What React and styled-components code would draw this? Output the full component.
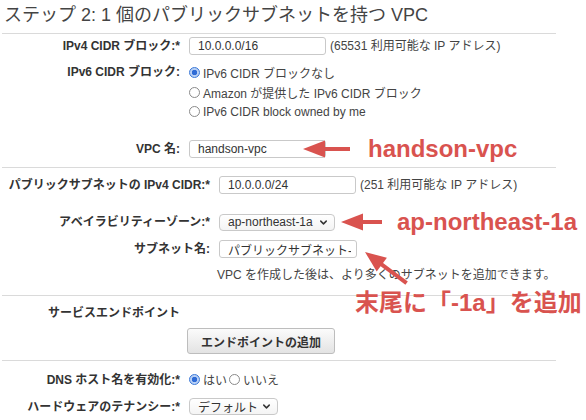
import React from 'react'
import styled, { createGlobalStyle } from 'styled-components'
import { ChevronDown } from 'lucide-react'

const GlobalStyle = createGlobalStyle`
  body {
    margin: 0;
    background: #fff;
    font-family: "Liberation Sans", "Noto Sans CJK JP", sans-serif;
    color: #444;
  }
`

const RED = '#d9534f'

function LeftArrow({ width }) {
  return (
    <svg width={width} height="18" viewBox={`0 0 ${width} 18`}>
      <polygon points="0,9 22,0.5 22,17.5" fill={RED} />
      <rect x="20" y="7" width={width - 20} height="4" fill={RED} />
    </svg>
  )
}

function App() {
  return (
    <Page>
      <GlobalStyle />
      <Title>ステップ 2: 1 個のパブリックサブネットを持つ VPC</Title>
      <Rule $top={6} />

      <Row $label={180} $gap={3} $h={18}>
        <Label>IPv4 CIDR ブロック:*</Label>
        <Field>
          <TextBox readOnly value="10.0.0.0/16" $w={137} />
          <Note>(65531 利用可能な IP アドレス)</Note>
        </Field>
      </Row>
      <Row $label={180} $gap={8} $h={58.5} $top>
        <Label $line={19.5}>IPv6 CIDR ブロック:</Label>
        <Options>
          <Choice><Radio $on />IPv6 CIDR ブロックなし</Choice>
          <Choice><Radio />Amazon が提供した IPv6 CIDR ブロック</Choice>
          <Choice><Radio />IPv6 CIDR block owned by me</Choice>
        </Options>
      </Row>
      <Row $label={180} $gap={18.5} $h={18}>
        <Label>VPC 名:</Label>
        <Field>
          <TextBox readOnly value="handson-vpc" $w={137} />
          <Callout $shift={-27} $gap={18}>
            <LeftArrow width={47} />
            <CalloutText>handson-vpc</CalloutText>
          </Callout>
        </Field>
      </Row>
      <Rule $top={9} />

      <Row $label={210} $gap={8} $h={18}>
        <Label>パブリックサブネットの IPv4 CIDR:*</Label>
        <Field>
          <TextBox readOnly value="10.0.0.0/24" $w={137} />
          <Note>(251 利用可能な IP アドレス)</Note>
        </Field>
      </Row>
      <Row $label={210} $gap={19} $h={17}>
        <Label>アベイラビリティーゾーン:*</Label>
        <Field>
          <Select $w={116}>
            ap-northeast-1a
            <ChevronDown size={11} strokeWidth={3.2} color="#333" />
          </Select>
          <Callout $shift={2} $gap={15}>
            <LeftArrow width={41} />
            <CalloutText>ap-northeast-1a</CalloutText>
          </Callout>
        </Field>
      </Row>
      <Row $label={210} $gap={10} $h={18}>
        <Label>サブネット名:</Label>
        <Field>
          <TextBox readOnly value="パブリックサブネット-1a" $w={138} />
        </Field>
      </Row>
      <Row $label={210} $gap={9} $h={16}>
        <span />
        <Hint>VPC を作成した後は、より多くのサブネットを追加できます。</Hint>
      </Row>
      <Rule $top={12} />

      <Row $label={180} $gap={9} $h={16}>
        <Label>サービスエンドポイント</Label>
        <span />
      </Row>
      <Row $label={180} $gap={7} $h={26}>
        <span />
        <Button type="button">エンドポイントの追加</Button>
      </Row>
      <Rule $top={6} />

      <Row $label={180} $gap={9} $h={18}>
        <Label>DNS ホスト名を有効化:*</Label>
        <Field $gap={2}>
          <Choice><Radio $on />はい</Choice>
          <Choice><Radio />いいえ</Choice>
        </Field>
      </Row>
      <Row $label={180} $gap={10} $h={17}>
        <Label>ハードウェアのテナンシー:*</Label>
        <Field>
          <Select $w={89}>
            デフォルト
            <ChevronDown size={11} strokeWidth={3.2} color="#333" />
          </Select>
        </Field>
      </Row>

      <Pointer width="50" height="42" viewBox="0 0 50 42">
        <g transform="translate(5,7) rotate(36.87)">
          <polygon points="0,0 21,-8.5 21,8.5" fill={RED} />
          <rect x="19" y="-2" width="33" height="4" fill={RED} />
        </g>
      </Pointer>
      <Remark>末尾に「-1a」を追加</Remark>
    </Page>
  )
}

export default App

const Page = styled.div`
  position: relative;
  width: 586px;
  height: 420px;
  overflow: hidden;
  padding-top: 3px;
  box-sizing: border-box;
`

const Title = styled.h2`
  margin: 0 0 0 4px;
  height: 24px;
  font-size: 18px;
  font-weight: normal;
  line-height: 24px;
  color: #444;
  white-space: nowrap;
`

const Rule = styled.hr`
  margin: ${p => p.$top}px 30px 0 2px;
  border: 0;
  border-top: 1px solid #dadada;
  height: 0;
`

const Row = styled.div`
  display: grid;
  grid-template-columns: ${p => p.$label}px auto;
  column-gap: 9px;
  align-items: ${p => (p.$top ? 'start' : 'center')};
  height: ${p => p.$h}px;
  margin-top: ${p => p.$gap || 0}px;
`

const Label = styled.div`
  text-align: right;
  font-size: 12px;
  font-weight: bold;
  color: #333;
  white-space: nowrap;
  line-height: ${p => p.$line || 16}px;
`

const Field = styled.div`
  display: flex;
  align-items: center;
  height: 100%;
  gap: ${p => p.$gap ?? 4}px;
`

const TextBox = styled.input`
  width: ${p => p.$w}px;
  height: 18px;
  box-sizing: border-box;
  border: 1px solid #c9c9c9;
  border-radius: 3px;
  padding: 0 5px 0 8px;
  font-family: inherit;
  font-size: 12px;
  color: #333;
  background: #fff;
  outline: none;
`

const Note = styled.span`
  font-size: 12px;
  line-height: 16px;
  color: #444;
  white-space: nowrap;
`

const Options = styled.div`
  display: flex;
  flex-direction: column;
`

const Choice = styled.label`
  display: inline-flex;
  align-items: center;
  gap: 3px;
  height: 19.5px;
  font-size: 12px;
  color: #444;
  white-space: nowrap;
`

const Radio = styled.span`
  width: 11px;
  height: 11px;
  flex: none;
  box-sizing: border-box;
  border-radius: 50%;
  border: 1px solid ${p => (p.$on ? '#3a78d8' : '#8a8a8a')};
  background: ${p =>
    p.$on ? 'radial-gradient(circle, #2e6bd6 0 2.5px, #b8d0f5 3px)' : '#fff'};
`

const Select = styled.div`
  width: ${p => p.$w}px;
  height: 17px;
  box-sizing: border-box;
  border: 1px solid #c9c9c9;
  border-radius: 4px;
  background: linear-gradient(#fff, #f4f4f4);
  display: flex;
  align-items: center;
  justify-content: space-between;
  padding: 0 5px 0 8px;
  font-size: 12px;
  color: #333;
  white-space: nowrap;
`

const Callout = styled.div`
  display: flex;
  align-items: center;
  height: 18px;
  margin-left: ${p => p.$shift}px;
  gap: ${p => p.$gap}px;
`

const CalloutText = styled.span`
  color: ${RED};
  font-size: 24px;
  font-weight: bold;
  line-height: 18px;
  white-space: nowrap;
`

const Hint = styled.div`
  margin-left: -2px;
  font-size: 12px;
  line-height: 16px;
  color: #444;
  white-space: nowrap;
`

const Button = styled.button`
  margin-left: -2px;
  width: 148px;
  height: 26px;
  border: 1px solid #bdbdbd;
  border-radius: 3px;
  background: linear-gradient(#fbfbfb, #e3e3e3);
  font-family: inherit;
  font-size: 12px;
  font-weight: bold;
  color: #333;
  padding: 0;
`

const Pointer = styled.svg`
  position: absolute;
  left: 360px;
  top: 245px;
`

const Remark = styled.div`
  position: absolute;
  left: 355px;
  top: 291px;
  color: ${RED};
  font-size: 24px;
  font-weight: bold;
  line-height: 24px;
  white-space: nowrap;
`
